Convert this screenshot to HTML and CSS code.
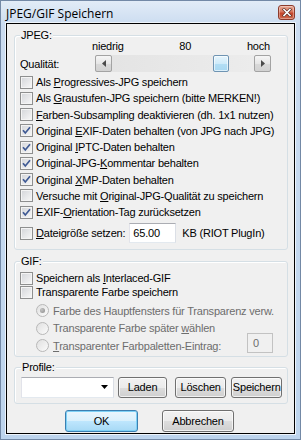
FILE: index.html
```html
<!DOCTYPE html>
<html>

<head>
  <title>JPEG/GIF Speichern</title>
  <link rel="stylesheet" href="styles.css">
</head>

<body>
  <div class="window">
    <div class="titlebar">
      <span class="title">JPEG/GIF Speichern</span>
      <span class="close">
        <svg viewBox="0 0 10 9" width="10" height="9">
          <path d="M2 1.5 L8 7.5 M8 1.5 L2 7.5" stroke="#5a2a20" stroke-width="3" stroke-linecap="square" />
          <path d="M2 1.5 L8 7.5 M8 1.5 L2 7.5" stroke="#fff" stroke-width="1.6" stroke-linecap="square" />
        </svg>
      </span>
    </div>

    <div class="client">
      <fieldset class="group group-jpeg">
        <legend>JPEG:</legend>
        <div class="scale">
          <span>niedrig</span>
          <span>80</span>
          <span>hoch</span>
        </div>
        <div class="quality">
          <span class="quality-label">Qualität:</span>
          <div class="scrollbar">
            <span class="arrow">
              <svg viewBox="0 0 4 7" width="4" height="7"><path d="M4 0 L0 3.5 L4 7 Z" fill="#4a4a4a" /></svg>
            </span>
            <span class="track"><span class="thumb"></span></span>
            <span class="arrow">
              <svg viewBox="0 0 4 7" width="4" height="7"><path d="M0 0 L4 3.5 L0 7 Z" fill="#4a4a4a" /></svg>
            </span>
          </div>
        </div>

        <div class="checks">
          <div class="check"><span class="box"></span><span>Als <u>P</u>rogressives-JPG speichern</span></div>
          <div class="check"><span class="box"></span><span>Als <u>G</u>raustufen-JPG speichern (bitte MERKEN!)</span></div>
          <div class="check"><span class="box"></span><span><u>F</u>arben-Subsampling deaktivieren (dh. 1x1 nutzen)</span></div>
          <div class="check"><span class="box"><svg viewBox="0 0 11 11"><path d="M2 5.2 L4.3 8 L9 2.3" /></svg></span><span>Original <u>E</u>XIF-Daten behalten (von JPG nach JPG)</span></div>
          <div class="check"><span class="box"><svg viewBox="0 0 11 11"><path d="M2 5.2 L4.3 8 L9 2.3" /></svg></span><span>Original <u>I</u>PTC-Daten behalten</span></div>
          <div class="check"><span class="box"><svg viewBox="0 0 11 11"><path d="M2 5.2 L4.3 8 L9 2.3" /></svg></span><span>Original-JPG-<u>K</u>ommentar behalten</span></div>
          <div class="check"><span class="box"><svg viewBox="0 0 11 11"><path d="M2 5.2 L4.3 8 L9 2.3" /></svg></span><span>Original <u>X</u>MP-Daten behalten</span></div>
          <div class="check"><span class="box"></span><span>Versuche mit <u>O</u>riginal-JPG-Qualität zu speichern</span></div>
          <div class="check"><span class="box"><svg viewBox="0 0 11 11"><path d="M2 5.2 L4.3 8 L9 2.3" /></svg></span><span>EXIF-<u>O</u>rientation-Tag zurücksetzen</span></div>
        </div>

        <div class="size-row">
          <div class="check"><span class="box"></span><span><u>D</u>ateigröße setzen:</span></div>
          <span class="edit size-edit">65.00</span>
          <span class="unit">KB (RIOT PlugIn)</span>
        </div>
      </fieldset>

      <fieldset class="group group-gif">
        <legend>GIF:</legend>
        <div class="check gif-check"><span class="box"></span><span>Speichern als <u>I</u>nterlaced-GIF</span></div>
        <div class="check gif-check"><span class="box"></span><span>Transparente Farbe speichern</span></div>
        <div class="radios">
          <div class="radio"><span class="dot on"></span><span>Farbe des Hauptfensters für Transparenz verw.</span></div>
          <div class="radio"><span class="dot"></span><span>Transparente Farbe später <u>w</u>ählen</span></div>
          <div class="radio"><span class="dot"></span><span><u>T</u>ransparenter Farbpaletten-Eintrag:</span>
            <span class="edit index-edit">0</span>
          </div>
        </div>
      </fieldset>

      <fieldset class="group group-profile">
        <legend>Profile:</legend>
        <div class="profile-row">
          <span class="combo">
            <svg viewBox="0 0 7 4" width="7" height="4"><path d="M0 0 L7 0 L3.5 4 Z" fill="#000" /></svg>
          </span>
          <button class="btn btn-load">Laden</button>
          <button class="btn btn-delete">Löschen</button>
          <button class="btn btn-save">Speichern</button>
        </div>
      </fieldset>

      <div class="actions">
        <button class="btn btn-ok">OK</button>
        <button class="btn btn-cancel">Abbrechen</button>
      </div>
    </div>
  </div>
</body>

</html>
```

FILE: styles.css
```css
* {
  box-sizing: border-box;
}

body {
  margin: 0;
  font-family: "Liberation Sans", Arial, sans-serif;
  font-size: 11px;
  letter-spacing: -0.2px;
  color: #000;
}

u {
  text-decoration-thickness: 1px;
  text-underline-offset: 1px;
}

/* window frame */
.window {
  width: 301px;
  height: 440px;
  border: 1px solid #7389a6;
  background: linear-gradient(#e2ecf7, #cbdcf0 24px, #bdd4ed);
  padding: 0 5px 5px 5px;
  display: flex;
  flex-direction: column;
}

.titlebar {
  height: 22px;
  display: flex;
  justify-content: space-between;
  align-items: flex-start;
}

.title {
  font-family: "Open Sans", "Noto Sans", sans-serif;
  font-size: 12px;
  line-height: 16px;
  margin-top: 5px;
  letter-spacing: 0;
}

.close {
  width: 17px;
  height: 15px;
  margin-top: 4px;
  border: 1px solid #8c3b2c;
  border-radius: 3px;
  background: linear-gradient(#e9a995, #d8765d 45%, #c5452b 55%, #cf6a4d);
  display: flex;
  align-items: center;
  justify-content: center;
  box-shadow: inset 0 0 0 1px rgba(255, 255, 255, 0.35);
}

.close svg {
  display: block;
}

.client {
  flex: 1;
  background: #f0f0f0;
  border: 1px solid #000;
  box-shadow: 0 0 0 1px #eef4fb;
  display: flex;
  flex-direction: column;
}

/* group boxes */
.group {
  margin: 5px 6px 0 7px;
  padding: 0 5px 6px 5px;
  border: 1px solid #d5dfe5;
  border-radius: 3px;
  box-shadow: inset 1px 1px 0 #fff;
  min-width: 0;
}

.group legend {
  padding: 0 1px;
  line-height: 13px;
  background: #f0f0f0;
}

.scale {
  display: flex;
  justify-content: space-between;
  height: 13px;
  line-height: 13px;
  margin: -2px 0 0 72px;
  width: 178px;
}

.quality {
  display: flex;
  align-items: center;
  height: 17px;
  margin-top: 2px;
}

.quality-label {
  width: 75px;
}

.scrollbar {
  display: flex;
  width: 176px;
  height: 17px;
  background: linear-gradient(90deg, #e3e3e3, #ededed);
}

.arrow {
  width: 17px;
  height: 17px;
  border: 1px solid #a3a3a3;
  border-radius: 2px;
  background: linear-gradient(#f6f6f6, #e6e6e6 50%, #d9d9d9 51%, #d2d2d2);
  display: flex;
  align-items: center;
  justify-content: center;
  flex: none;
}

.track {
  flex: 1;
  display: flex;
}

.thumb {
  width: 16px;
  height: 17px;
  margin-left: 101px;
  border: 1px solid #6f94b3;
  border-radius: 2px;
  background: linear-gradient(#e6f5fd, #cfebfa 50%, #b3def5 51%, #a8d8f2);
  box-shadow: inset 0 0 0 1px rgba(255, 255, 255, 0.6);
}

/* check boxes and radios */
.checks {
  margin-top: 2px;
}

.check,
.radio {
  display: flex;
  align-items: center;
  height: 16.25px;
  white-space: nowrap;
}

.box {
  width: 13px;
  height: 13px;
  margin-right: 3px;
  flex: none;
  border: 1px solid #8e8f8f;
  background: linear-gradient(135deg, #d3d5d9, #f8f8f8);
  box-shadow: inset 0 0 0 1px #f4f4f4;
}

.box svg {
  display: block;
  width: 11px;
  height: 11px;
}

.box svg path {
  fill: none;
  stroke: #3f5a94;
  stroke-width: 1.7;
}

.size-row {
  display: flex;
  align-items: center;
  height: 20px;
  margin-top: 2.75px;
}

.edit {
  height: 20px;
  border: 1px solid #abadb3;
  border-left-color: #e2e3ea;
  border-right-color: #dbdfe6;
  border-bottom-color: #e3e9ef;
  background: #fff;
  padding: 0 3px;
  line-height: 18px;
}

.size-edit {
  width: 47px;
  margin-left: 4px;
}

.unit {
  margin-left: 6px;
}

.group-gif {
  padding-bottom: 1.5px;
}

.gif-check {
  height: 14px;
}

.gif-check:first-of-type {
  margin-top: 3px;
}

.radios {
  margin-top: 2.75px;
  padding-left: 16px;
  color: #6d6d6d;
}

.radio {
  height: 17.5px;
}

.dot {
  width: 13px;
  height: 13px;
  margin-right: 4px;
  flex: none;
  border: 1px solid #b8b8b8;
  border-radius: 50%;
  background: linear-gradient(135deg, #e0e0e0, #fbfbfb);
  display: flex;
  align-items: center;
  justify-content: center;
}

.dot.on::before {
  content: "";
  width: 5px;
  height: 5px;
  border-radius: 50%;
  background: radial-gradient(circle at 35% 35%, #c4c4c4, #8a8a8a);
}

.index-edit {
  width: 26px;
  margin: -6px 9px 0 auto;
  padding-left: 5px;
  color: #6d6d6d;
  background: #f0f0f0;
  border-color: #c2c2c2;
}

.group-profile {
  margin-top: 4px;
  padding: 3px 5px 5px 6px;
}

.profile-row {
  display: flex;
  align-items: center;
  height: 21px;
}

.combo {
  width: 94px;
  height: 21px;
  background: #fff;
  border: 1px solid #abadb3;
  border-left-color: #e2e3ea;
  border-right-color: #dbdfe6;
  border-bottom-color: #e3e9ef;
  display: flex;
  align-items: center;
  justify-content: flex-end;
  padding-right: 5px;
}

.combo svg {
  display: block;
}

/* push buttons */
.btn {
  font-family: inherit;
  font-size: 11px;
  letter-spacing: -0.2px;
  color: #000;
  height: 21px;
  padding: 0;
  border: 1px solid #707070;
  border-radius: 3px;
  background: linear-gradient(#f2f2f2, #ebebeb 50%, #dddddd 51%, #cfcfcf);
  box-shadow: inset 0 0 0 1px rgba(255, 255, 255, 0.7);
}

.btn-load {
  width: 49px;
  margin-left: 4px;
}

.btn-delete {
  width: 52px;
  margin-left: 8px;
}

.btn-save {
  width: 51px;
  margin-left: 5px;
}

.actions {
  display: flex;
  margin-top: 6px;
  padding-left: 58px;
}

.btn-ok {
  width: 73px;
  height: 22px;
  border-color: #3c7fb1;
  background: linear-gradient(#eaf6fd, #d9f0fc 50%, #bee6fd 51%, #a7d9f5);
  box-shadow: inset 0 0 0 1px #7ed1f6;
}

.btn-cancel {
  width: 72px;
  height: 22px;
  margin-left: 24px;
}
```
